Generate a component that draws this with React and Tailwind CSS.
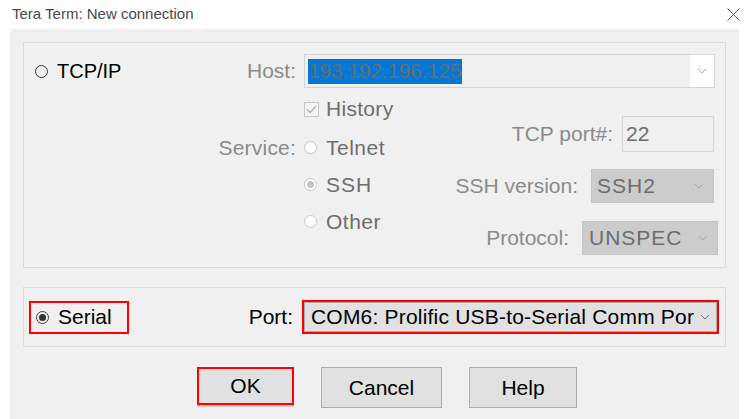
import React from "react";

const Chevron = ({ color = "#8f8f8f" }) => (
  <svg width="10" height="6" viewBox="0 0 10 6" fill="none">
    <path d="M1 1 L5 5 L9 1" stroke={color} strokeWidth="1" />
  </svg>
);

const Radio = ({ dark = false, dot = null }) => (
  <span
    className={
      "flex h-[13px] w-[13px] shrink-0 items-center justify-center rounded-full border " +
      (dark ? "border-[#3c3c3c] bg-[#f0f0f0]" : "border-[#c6c6c6] bg-white")
    }
  >
    {dot && <span className="h-[7px] w-[7px] rounded-full" style={{ background: dot }} />}
  </span>
);

const App = () => {
  return (
    <div
      className="flex h-[419px] w-[752px] flex-col overflow-hidden bg-white"
      style={{ fontFamily: '"Liberation Sans", Arial, sans-serif' }}
    >
      {/* title bar */}
      <div className="flex h-[29px] shrink-0 items-center justify-between pl-[12px] pr-[12px]">
        <span className="text-[15px] text-[#4a4a4a]">Tera Term: New connection</span>
        <svg width="13" height="13" viewBox="0 0 13 13">
          <path d="M0.5 0.5 L12.5 12.5 M12.5 0.5 L0.5 12.5" stroke="#555" strokeWidth="1" />
        </svg>
      </div>

      <div className="ml-[10px] mr-[13px] flex flex-1 flex-col bg-[#f0f0f0] pl-[13px] pt-[13px]">
        {/* TCP/IP group */}
        <div className="flex h-[226px] w-[703px] flex-col border border-[#dadada]">
          <div className="mt-[11px] flex h-[34px] items-center">
            <div className="flex w-[272px] items-center justify-between pl-[11px]">
              <span className="flex items-center gap-[9px] text-[20px] text-black">
                <Radio dark />
                TCP/IP
              </span>
              <span className="text-[21px] text-[#8b8b8b]">Host:</span>
            </div>
            <div className="ml-[8px] flex h-[34px] w-[411px] items-center border border-[#d4d4d4] bg-[#f0f0f0]">
              <span className="ml-[3px] flex h-[25px] items-center bg-[#0078d7] pr-[1px] text-[21px] tracking-[-0.3px] text-[#6d6d6d]">
                193.192.196.125
              </span>
              <div className="ml-auto flex h-full w-[24px] items-center justify-center bg-white">
                <Chevron color="#a8a8a8" />
              </div>
            </div>
          </div>

          <div className="mt-[13px] flex h-[16px] items-center pl-[280px]">
            <span className="flex h-[15px] w-[15px] items-center justify-center border border-[#c6c6c6] bg-[#f4f4f4]">
              <svg width="11" height="9" viewBox="0 0 11 9" fill="none">
                <path d="M1 4.5 L4 7.5 L10 1" stroke="#b4b4b4" strokeWidth="1.3" />
              </svg>
            </span>
            <span className="ml-[7px] text-[21px] tracking-[0.3px] text-[#6d6d6d]">History</span>
          </div>

          <div className="flex">
            <div className="flex flex-col gap-[16px] pt-[20px]">
              <div className="flex h-[21px] items-center">
                <span className="w-[272px] text-right text-[21px] tracking-[0.2px] text-[#8b8b8b]">Service:</span>
                <span className="ml-[8px]">
                  <Radio />
                </span>
                <span className="ml-[9px] text-[21px] tracking-[0.5px] text-[#6d6d6d]">Telnet</span>
              </div>
              <div className="flex h-[21px] items-center pl-[280px]">
                <Radio dot="#c4c4c4" />
                <span className="ml-[9px] tracking-[1px] text-[21px] text-[#6d6d6d]">SSH</span>
              </div>
              <div className="flex h-[21px] items-center pl-[280px]">
                <Radio />
                <span className="ml-[9px] text-[21px] tracking-[0.5px] text-[#6d6d6d]">Other</span>
              </div>
            </div>

            <div className="flex flex-1 flex-col items-end pr-[7px]">
              <div className="-mt-[1px] mr-[4px] flex items-center">
                <span className="text-[21px] text-[#8b8b8b]">TCP port#:</span>
                <div className="ml-[9px] flex h-[36px] w-[92px] items-center border border-[#d4d4d4] pl-[3px] text-[21px] text-[#6d6d6d]">
                  22
                </div>
              </div>
              <div className="mr-[4px] mt-[17px] flex items-center">
                <span className="text-[21px] text-[#8b8b8b]">SSH version:</span>
                <div className="ml-[13px] flex h-[34px] w-[123px] items-center justify-between border border-[#c4c4c4] bg-[#cccccc] pl-[5px] pr-[9px]">
                  <span className="tracking-[1px] text-[21px] text-[#6d6d6d]">SSH2</span>
                  <Chevron color="#a8a8a8" />
                </div>
              </div>
              <div className="mt-[18px] flex items-center">
                <span className="text-[21px] text-[#8b8b8b]">Protocol:</span>
                <div className="ml-[13px] flex h-[34px] w-[136px] items-center justify-between border border-[#c4c4c4] bg-[#cccccc] pl-[6px] pr-[9px]">
                  <span className="tracking-[1px] text-[21px] text-[#6d6d6d]">UNSPEC</span>
                  <Chevron color="#a8a8a8" />
                </div>
              </div>
            </div>
          </div>
        </div>

        {/* Serial group */}
        <div className="mt-[19px] flex h-[60px] w-[703px] items-center border border-[#dadada]">
          <div className="ml-[5px] flex h-[33px] w-[100px] items-center border-2 border-[#ff0000] pl-[5px]">
            <Radio dark dot="#333333" />
            <span className="ml-[9px] text-[21px] text-black">Serial</span>
          </div>
          <span className="ml-auto text-[21px] text-black">Port:</span>
          <div className="ml-[9px] mr-[6px] flex h-[34px] w-[417px] items-center border-2 border-[#ff0000]">
            <div className="flex h-full flex-1 items-center justify-between border border-[#adadad] bg-[#e1e1e1] pl-[6px] pr-[6px]">
              <span className="whitespace-nowrap text-[21px] tracking-[0.2px] text-black">COM6: Prolific USB-to-Serial Comm Por</span>
              <Chevron color="#777" />
            </div>
          </div>
        </div>

        {/* buttons */}
        <div className="mt-[20px] flex items-start pl-[174px]">
          <button className="flex h-[38px] w-[97px] items-center justify-center border-2 border-[#ff0000] bg-[#e1e1e1] text-[21px] text-black shadow-[0_2px_0_#c8c8c8]">
            OK
          </button>
          <button className="ml-[27px] flex h-[41px] w-[121px] items-center justify-center border border-[#adadad] bg-[#e1e1e1] text-[21px] text-black">
            Cancel
          </button>
          <button className="ml-[27px] flex h-[41px] w-[108px] items-center justify-center border border-[#adadad] bg-[#e1e1e1] text-[21px] text-black">
            Help
          </button>
        </div>
      </div>
    </div>
  );
};

export default App;
